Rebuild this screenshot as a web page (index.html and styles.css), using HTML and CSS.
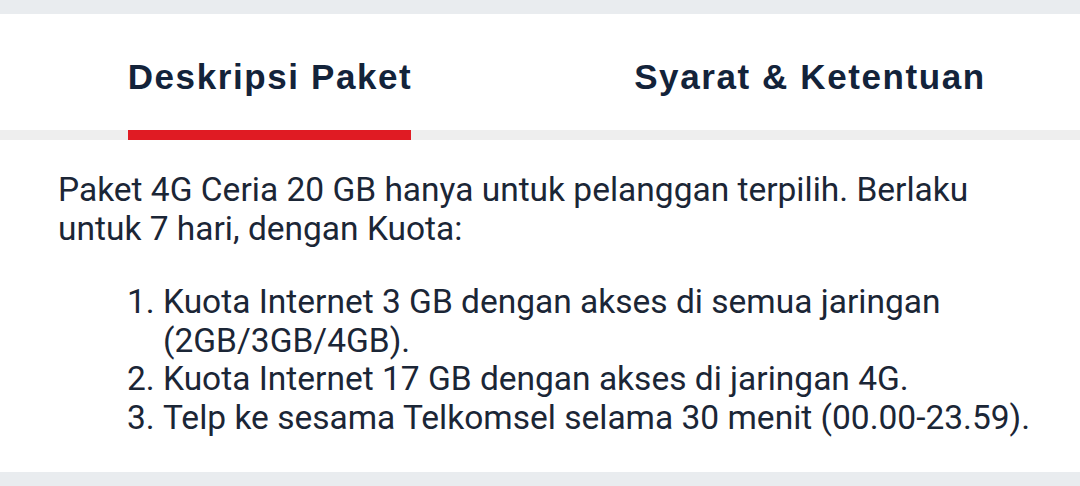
FILE: index.html
```html
<!DOCTYPE html>
<html>
<head>
<meta charset="utf-8">
<link rel="stylesheet" href="styles.css">
</head>
<body>
<div class="top-band"></div>
<div class="card">
  <div class="tabs">
    <div class="tab active"><span class="tab-label">Deskripsi Paket</span></div>
    <div class="tab"><span class="tab-label">Syarat &amp; Ketentuan</span></div>
  </div>
  <div class="content">
    <p class="intro">Paket 4G Ceria 20 GB hanya untuk pelanggan terpilih. Berlaku untuk 7 hari, dengan Kuota:</p>
    <ol class="list">
      <li>Kuota Internet 3 GB dengan akses di semua jaringan (2GB/3GB/4GB).</li>
      <li>Kuota Internet 17 GB dengan akses di jaringan 4G.</li>
      <li>Telp ke sesama Telkomsel selama 30 menit (00.00-23.59).</li>
    </ol>
  </div>
</div>
<div class="bottom-band"></div>
</body>
</html>
```
FILE: styles.css
```css
html, body {
  margin: 0;
  padding: 0;
  width: 1080px;
  height: 486px;
  overflow: hidden;
  background: #e9ecef;
}
.top-band {
  height: 14px;
  background: #e9ecef;
}
.card {
  background: #ffffff;
  height: 458px;
}
.tabs {
  display: flex;
  height: 116px;
  border-bottom: 10px solid #eeeeee;
  box-sizing: content-box;
}
.tab {
  flex: 1;
  display: flex;
  justify-content: center;
  align-items: stretch;
}
.tab-label {
  font-family: "Liberation Sans", Arial, sans-serif;
  font-weight: bold;
  font-size: 35px;
  letter-spacing: 1.6px;
  color: #13233a;
  display: flex;
  align-items: center;
  padding-top: 10px;
  position: relative;
}
.tab.active .tab-label::after {
  content: "";
  position: absolute;
  left: 0;
  right: 1px;
  bottom: -10px;
  height: 10px;
  background: #e01b23;
}
.content {
  padding: 31px 40px 0 58px;
  font-family: Roboto, "Noto Sans", sans-serif;
  font-size: 33.5px;
  line-height: 38.5px;
  color: #1b2636;
}
.intro {
  margin: 0 0 35px 0;
}
.list {
  margin: 0;
  padding-left: 105px;
}
```
